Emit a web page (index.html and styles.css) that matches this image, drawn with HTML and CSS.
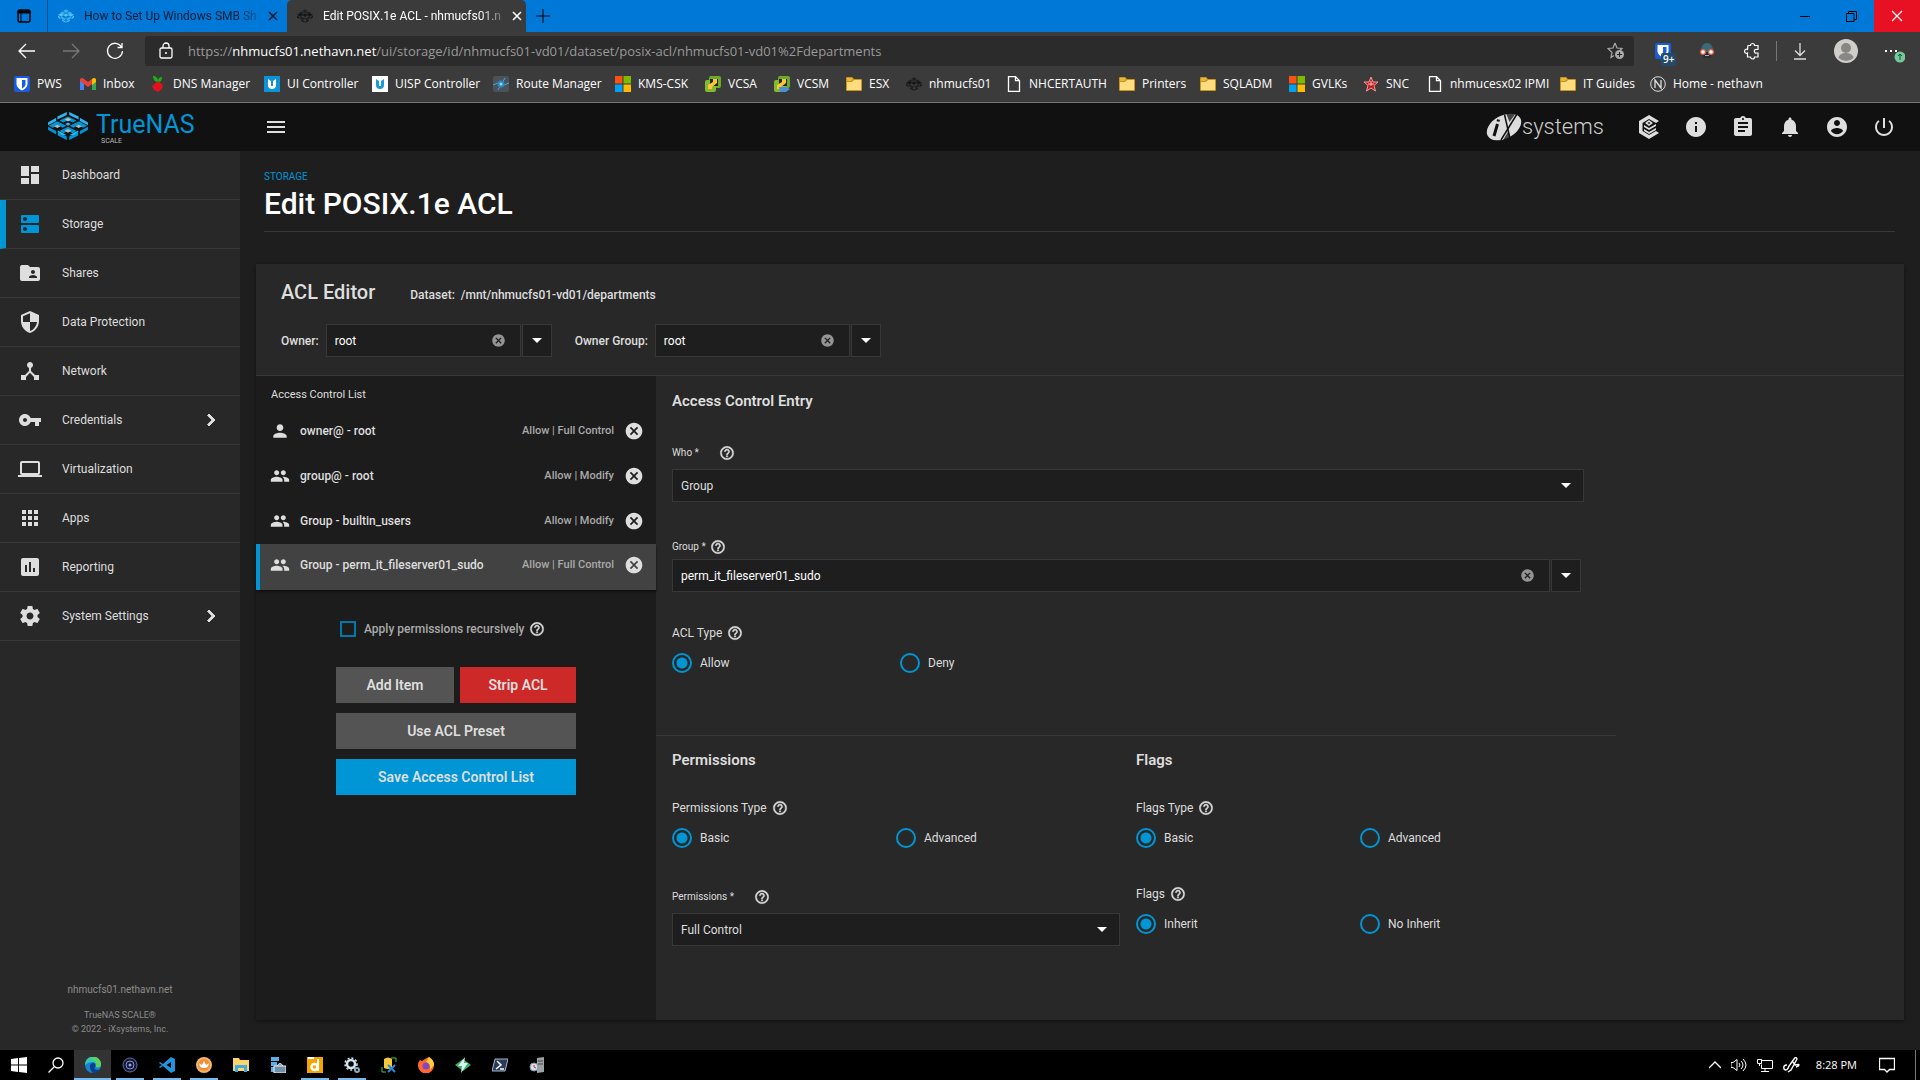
FILE: index.html
```html
<!DOCTYPE html>
<html lang="en">
<head>
<meta charset="utf-8">
<meta name="viewport" content="width=device-width, initial-scale=1">
<title>Edit POSIX.1e ACL - nhmucfs01.nethavn.net</title>
<link rel="stylesheet" href="styles.css">
</head>
<body>
<svg class="sprite" aria-hidden="true">
  <symbol id="close" viewBox="0 0 12 12"><path d="M2 2l8 8M10 2l-8 8" fill="none" stroke="currentColor" stroke-width="1.6"/></symbol>
  <symbol id="cancel" viewBox="0 0 24 24"><path d="M12 2C6.47 2 2 6.47 2 12s4.47 10 10 10 10-4.47 10-10S17.53 2 12 2zm5 13.59L15.59 17 12 13.41 8.41 17 7 15.59 10.59 12 7 8.41 8.41 7 12 10.59 15.59 7 17 8.41 13.41 12 17 15.59z"/></symbol>
  <symbol id="help" viewBox="0 0 24 24"><path d="M11 18h2v-2h-2v2zm1-16C6.48 2 2 6.48 2 12s4.48 10 10 10 10-4.48 10-10S17.52 2 12 2zm0 18c-4.41 0-8-3.59-8-8s3.59-8 8-8 8 3.59 8 8-3.59 8-8 8zm0-14c-2.21 0-4 1.79-4 4h2c0-1.1.9-2 2-2s2 .9 2 2c0 2-3 1.75-3 5h2c0-2.25 3-2.5 3-5 0-2.21-1.79-4-4-4z" stroke="currentColor" stroke-width=".6"/></symbol>
  <symbol id="person" viewBox="0 0 24 24"><path d="M12 12c2.21 0 4-1.79 4-4s-1.79-4-4-4-4 1.79-4 4 1.79 4 4 4zm0 2c-2.67 0-8 1.34-8 4v2h16v-2c0-2.66-5.33-4-8-4z"/></symbol>
  <symbol id="people" viewBox="0 0 24 24"><path d="M16 11c1.66 0 2.99-1.34 2.99-3S17.66 5 16 5c-1.66 0-3 1.34-3 3s1.34 3 3 3zm-8 0c1.66 0 2.99-1.34 2.99-3S9.66 5 8 5C6.34 5 5 6.34 5 8s1.34 3 3 3zm0 2c-2.33 0-7 1.17-7 3.5V19h14v-2.5c0-2.33-4.67-3.5-7-3.5zm8 0c-.29 0-.62.02-.97.05 1.16.84 1.97 1.97 1.97 3.45V19h6v-2.5c0-2.33-4.67-3.5-7-3.5z"/></symbol>
  <symbol id="chevron" viewBox="0 0 24 24"><path d="M10 6L8.59 7.41 13.17 12l-4.58 4.59L10 18l6-6z" stroke="currentColor"/></symbol>
  <symbol id="folder" viewBox="0 0 16 16"><path d="M0 2q0-1 1-1h5l2 2h7q1 0 1 1v10q0 1-1 1H1q-1 0-1-1z" fill="#c8951c"/><path d="M1 6h5l2-2h7v10H1z" fill="#ffdd7e"/><path d="M1 2h5l1 1-2 2H1z" fill="#e9b43a"/></symbol>
  <symbol id="windows4" viewBox="0 0 16 16"><path d="M0 0h7.500v7.500H0z" fill="#f65314"/><path d="M8.500 0H16v7.500H8.500z" fill="#7cbb00"/><path d="M0 8.500h7.500V16H0z" fill="#00a1f1"/><path d="M8.500 8.500H16V16H8.500z" fill="#ffbb00"/></symbol>
  <symbol id="page" viewBox="0 0 16 16"><path d="M2.500.700h7l4 4v10.600h-11zM9.500.700v4h4" fill="none" stroke="#fff" stroke-width="1.300"/></symbol>
  <symbol id="shield" viewBox="0 0 16 16"><rect width="16" height="16" rx="2" fill="#175ddc"/><path d="M2.500 2h11v6c0 3-3 5.500-5.500 6.500C5.500 13.500 2.500 11 2.500 8z" fill="#fff"/><path d="M8 4h3.500v4.500c0 1.500-2 3-3.500 4z" fill="#175ddc"/></symbol>
  <symbol id="nas" viewBox="0 0 40 34"><path class="nas-a" d="M20 0l7 4.500-7 4-7-4zM11.500 5.500l7 4-7 4-7-4zM28.500 5.500l7 4-7 4-7-4zM8 17l10 6v6L8 23zM32 17l-10 6v6l10-6z"/><path class="nas-b" d="M0 14l8-4 7 4-7 4zM40 14l-8-4-7 4 7 4zM20 11l7 4-7 4-7-4zM0 16l6 4v5l-6-5zM40 16l-6 4v5l6-5zM10 26l9 5v3l-9-5zM30 26l-9 5v3l9-5z"/><path class="nas-c" d="M20 6l4 2-4 3-4-3zM9 13l4 2-4 3-4-3zM31 13l4 2-4 3-4-3zM20 20l4 2-4 3-4-3z"/></symbol>
  <symbol id="putty" viewBox="0 0 16 16"><rect x="4" y="0" width="12" height="12" rx="2" fill="#68ad25"/><rect x="0" y="4" width="11" height="12" rx="2" fill="#81bb31"/><path d="M5 3h8v7h-8z" fill="#26251c"/><path d="M8 3h4v4L7 11v2H3V9l5-3z" fill="#ffc33d"/></symbol>
</svg>

<div class="window">
  <header class="browser">
    <div class="tabbar">
      <button class="tab-actions" aria-label="Tab actions"><svg width="14" height="14" viewBox="0 0 14 14"><rect x="1" y="1" width="12" height="12" rx="2" fill="none" stroke="#000" stroke-width="1.500"/><path d="M1 2h12v2H1zM4 4v9" stroke="#000" fill="#000"/></svg></button>
      <div class="tab">
        <svg class="nas-light" width="16" height="14"><use href="#nas"/></svg>
        <span class="tab-title">How to Set Up Windows SMB Sh</span>
        <button aria-label="Close tab"><svg width="12" height="12"><use href="#close"/></svg></button>
      </div>
      <div class="tab active">
        <svg class="nas-dark" width="16" height="14"><use href="#nas"/></svg>
        <span class="tab-title">Edit POSIX.1e ACL - nhmucfs01.n</span>
        <button aria-label="Close tab"><svg width="12" height="12"><use href="#close"/></svg></button>
      </div>
      <button class="new-tab" aria-label="New tab"><svg width="14" height="14" viewBox="0 0 14 14"><path d="M7 0v14M0 7h14" stroke="#000"/></svg></button>
      <div class="window-buttons">
        <button aria-label="Minimize"><svg width="10" height="10" viewBox="0 0 10 10"><path d="M0 5.500h10" stroke="#000"/></svg></button>
        <button aria-label="Restore"><svg width="11" height="11" viewBox="0 0 11 11"><path d="M.5 2.500h7.500v8H.5zM2.500 2V.500h8v8H8.500" fill="none" stroke="#000"/></svg></button>
        <button class="close-window" aria-label="Close"><svg width="14" height="14" viewBox="0 0 14 14"><path d="M2 2l10 10M12 2L2 12" stroke="#fff" stroke-width="1.200"/></svg></button>
      </div>
    </div>

    <div class="toolbar">
      <nav class="history">
        <button aria-label="Back"><svg width="18" height="16" viewBox="0 0 18 16"><path d="M17 8H1M8 1L1 8l7 7" fill="none" stroke="#fff" stroke-width="1.300"/></svg></button>
        <button aria-label="Forward"><svg width="18" height="16" viewBox="0 0 18 16"><path d="M1 8h16M10 1l7 7-7 7" fill="none" stroke="#777" stroke-width="1.300"/></svg></button>
        <button aria-label="Refresh"><svg width="18" height="18" viewBox="0 0 18 18"><path d="M15.500 5A7.500 7.500 0 1 0 16.500 9M16 1v4.500h-4.500" fill="none" stroke="#fff" stroke-width="1.300"/></svg></button>
      </nav>
      <div class="address">
        <svg width="14" height="18" viewBox="0 0 14 18"><rect x="1" y="6" width="12" height="10" rx="1.500" fill="none" stroke="#fff" stroke-width="1.300"/><path d="M4 6V4a3 3 0 0 1 6 0v2" fill="none" stroke="#fff" stroke-width="1.300"/><circle cx="7" cy="11" r="1" fill="#fff"/></svg>
        <span class="url">https://<b>nhmucfs01.nethavn.net</b>/ui/storage/id/nhmucfs01-vd01/dataset/posix-acl/nhmucfs01-vd01%2Fdepartments</span>
        <svg width="18" height="18" viewBox="0 0 18 18"><path d="M8 1l2 5 5 .5-3 3M8 1L6 6l-5 .5 4 4-1 5 3-2" fill="none" stroke="#aaa" stroke-width="1.200"/><circle cx="12.500" cy="12.500" r="4.500" fill="#aaa"/><path d="M12.500 10v5M10 12.500h5" stroke="#222"/></svg>
      </div>
      <div class="extensions">
        <button class="badged" aria-label="Password manager"><svg width="16" height="18"><use href="#shield"/></svg><span class="badge">9+</span></button>
        <button aria-label="Extension"><svg width="16" height="18" viewBox="0 0 16 18"><path d="M2 8a6 7 0 0 1 12 0v3H2z" fill="#386a7c"/><path d="M4 10h8v6H4z" fill="#263238"/><circle cx="4" cy="10" r="3" fill="#e9623e"/><circle cx="12" cy="10" r="3" fill="#e9623e"/><circle cx="4" cy="10" r="1.800" fill="#fff"/><circle cx="12" cy="10" r="1.800" fill="#fff"/><path d="M6 13h4v1H6z" fill="#aaa"/></svg></button>
        <button aria-label="Extensions"><svg width="16" height="18" viewBox="0 0 16 18"><path d="M4 3.500h2.500a2 2 0 1 1 4 0H14v4h-1.500a1.800 1.800 0 1 0 0 3.500H14v4h-3.500a2 2 0 0 1-4 0H3.500V11a2 2 0 1 1 0-3.500z" fill="none" stroke="#fff" stroke-width="1.200"/></svg></button>
        <span class="rule"></span>
        <button aria-label="Downloads"><svg width="14" height="17" viewBox="0 0 14 17"><path d="M7 0v12M2 7.500l5 5 5-5M1 16h12" fill="none" stroke="#ddd" stroke-width="1.300"/></svg></button>
        <button aria-label="Profile"><svg width="24" height="24" viewBox="0 0 24 24"><circle cx="12" cy="12" r="12" fill="#d0cec9"/><circle cx="12" cy="9" r="5" fill="#8a8683"/><path d="M4.500 19a7.500 5 0 0 1 15 0q-7.500 6-15 0z" fill="#8a8683"/></svg></button>
        <button aria-label="Settings and more"><svg width="24" height="24" viewBox="0 0 24 24"><path d="M4 11h2v2H4zM9 11h2v2H9zM14 11h2v2h-2z" fill="#fff"/><circle cx="19" cy="18" r="5.500" fill="#75c996"/><path d="M19 21v-6M17 17l2-2 2 2" fill="none" stroke="#154" /></svg></button>
      </div>
    </div>

    <nav class="bookmarks">
      <a href="#"><svg><use href="#shield"/></svg>PWS</a>
      <a href="#"><svg viewBox="0 0 16 16"><path d="M0 3h4v11H0z" fill="#4285f4"/><path d="M12 3h4v11h-4z" fill="#34a853"/><path d="M0 3q2-2 4 0l4 3 4-3v5l-4 3-4-3-4-3z" fill="#ea4335"/><path d="M12 3q2-2 4 0v3l-4 3z" fill="#fbbc04"/></svg>Inbox</a>
      <a href="#"><svg viewBox="0 0 16 16"><path d="M8 6C4 6 3 2 3 0c3 0 5 2 5 5 0-2 1-4 4-4 0 3-1 5-4 5z" fill="#16b316"/><path d="M8 5l5 4-1 4-4 3-4-2-2-4z" fill="#e0121c"/></svg>DNS Manager</a>
      <a href="#"><svg viewBox="0 0 16 16"><path d="M0 0h16v16H0z" fill="#0c93d8"/><path d="M4 3v6q0 4 4 4t4-4V3l-3 2v5H7V5z" fill="#fff"/></svg>UI Controller</a>
      <a href="#"><svg viewBox="0 0 16 16"><path d="M0 0h16v16H0z" fill="#fff"/><path d="M4 3v6q0 4 4 4t4-4V3l-3 2v5H7V5z" fill="#199cd8"/></svg>UISP Controller</a>
      <a href="#"><svg viewBox="0 0 16 16"><rect width="16" height="16" rx="2" fill="#4b5258"/><path d="M0 9l5-2 6 2 5-2M12 2L5 14" stroke="#3fa9e8" fill="none"/><circle cx="8" cy="8" r="3.500" fill="#2b87c5"/><circle cx="8" cy="8" r="1.500" fill="#acd"/></svg>Route Manager</a>
      <a href="#"><svg><use href="#windows4"/></svg>KMS-CSK</a>
      <a href="#"><svg><use href="#putty"/></svg>VCSA</a>
      <a href="#"><svg viewBox="0 0 16 16"><use href="#putty"/><path d="M5 11h7l4 2-4 3H6z" fill="#4b91d7"/></svg>VCSM</a>
      <a href="#"><svg><use href="#folder"/></svg>ESX</a>
      <a href="#"><svg class="nas-dark"><use href="#nas"/></svg>nhmucfs01</a>
      <a href="#"><svg><use href="#page"/></svg>NHCERTAUTH</a>
      <a href="#"><svg><use href="#folder"/></svg>Printers</a>
      <a href="#"><svg><use href="#folder"/></svg>SQLADM</a>
      <a href="#"><svg><use href="#windows4"/></svg>GVLKs</a>
      <a href="#"><svg viewBox="0 0 16 16"><path d="M8 1l2 5h5l-4 3.500 1.500 5.500L8 12l-4.500 3L5 9.500 1 6h5z" fill="#b71c1c" stroke="#f99"/><path d="M8 5v5M5 8h6" stroke="#fbb"/></svg>SNC</a>
      <a href="#"><svg><use href="#page"/></svg>nhmucesx02 IPMI</a>
      <a href="#"><svg><use href="#folder"/></svg>IT Guides</a>
      <a href="#"><svg viewBox="0 0 16 16"><circle cx="8" cy="8" r="7.300" fill="none" stroke="#ddd"/><path d="M5 12V4l6 8V4" fill="none" stroke="#ddd" stroke-width="1.300"/></svg>Home - nethavn</a>
    </nav>
  </header>

  <header class="app-header">
    <a class="brand" href="#" aria-label="TrueNAS SCALE">
      <svg width="40" height="28" viewBox="0 0 98 82" preserveAspectRatio="none">
        <path d="M46 0L23 13v9l23-13zM52 0l23 13v9L52 9zM20 17L0 31v8l20-13zM78 17l20 14v8L78 26z" fill="#34b4ee"/>
        <path d="M49 13L28 25l10 6 11-7 11 7 10-6zM22 27L2 40l10 6 12-8 12 8 9-6zM76 27L53 40l9 6 12-8 12 8 10-6zM49 43L28 56l10 6 11-7 11 7 10-6z" fill="#0095d5"/>
        <path d="M49 17l8 5-8 6-8-6zM23 37l8 5-8 5-8-5zM75 37l8 5-8 5-8-5zM49 50l8 5-8 6-8-6z" fill="#bbb"/>
        <path d="M0 43l20 13v10L0 52zM98 43L78 56v10l20-14zM24 58l22 14v10L24 69zM74 58L52 72v10l22-13z" fill="#0095d5"/>
        <path d="M24 54l10 6 12 8-12-1-10-9zM74 54l-10 6-12 8 12-1 10-9zM42 35l7 5 7-5-7-4z" fill="#34b4ee"/>
      </svg>
      <span class="brand-text"><span class="brand-name">TrueNAS</span><span class="brand-edition">SCALE</span></span>
    </a>
    <button class="menu-button" aria-label="Toggle menu"><svg width="26" height="24" viewBox="0 0 24 24"><path d="M3 18h18v-2H3v2zm0-5h18v-2H3v2zm0-7v2h18V6H3z"/></svg></button>
    <div class="app-actions">
      <a class="ix" href="#" aria-label="iXsystems"><svg width="36" height="28" viewBox="0 0 36 28"><ellipse cx="18" cy="14" rx="18.500" ry="11.500" transform="rotate(-28 18 14)" fill="#ddd"/><path d="M11.500 11L8 23M12.500 6.500l-.5 2" stroke="#111" stroke-width="3" fill="none"/><path d="M18.500 1.500l5.500 24" stroke="#111" stroke-width="1.500"/><path d="M31 1L15 27" stroke="#111" stroke-width="1.500"/><path d="M20 0h10l-6.500 9zM22.500 18l-6 10h9z" fill="#111" opacity=".75"/></svg><span>systems</span></a>
      <button aria-label="TrueCommand"><svg viewBox="0 0 24 24"><path d="M12 0l10 6-3 2-7-4-6.500 4v8l6.500 4 7-4 3 2-10 6-10-6V6z"/><path d="M12 5l4 3-4 3-4-3zM7 10l5 3v2l-5-3zM7 14l5 3v2l-5-3zM12 13l7-4v2l-7 4zM12 17l7-4v2l-7 4z"/><path d="M12 7l1.500 1L12 9l-1.500-1z" fill="#111"/></svg></button>
      <button aria-label="Status"><svg viewBox="0 0 24 24"><path d="M12 2C6.480 2 2 6.480 2 12s4.480 10 10 10 10-4.480 10-10S17.520 2 12 2zm1 15h-2v-6h2v6zm0-8h-2V7h2v2z"/></svg></button>
      <button aria-label="Tasks"><svg viewBox="0 0 24 24"><path d="M19 3h-4.180C14.400 1.840 13.300 1 12 1c-1.300 0-2.400.840-2.820 2H5c-1.100 0-2 .9-2 2v14c0 1.100.9 2 2 2h14c1.100 0 2-.9 2-2V5c0-1.100-.9-2-2-2zm-7 0c.550 0 1 .450 1 1s-.450 1-1 1-1-.450-1-1 .450-1 1-1zm2 14H7v-2h7v2zm3-4H7v-2h10v2zm0-4H7V7h10v2z"/></svg></button>
      <button aria-label="Alerts"><svg viewBox="0 0 24 24"><path d="M12 22c1.100 0 2-.9 2-2h-4c0 1.100.89 2 2 2zm6-6v-5c0-3.070-1.640-5.640-4.500-6.320V4c0-.83-.67-1.500-1.500-1.500s-1.500.67-1.500 1.500v.68C7.630 5.360 6 7.920 6 11v5l-2 2v1h16v-1l-2-2z"/></svg></button>
      <button aria-label="Account"><svg viewBox="0 0 24 24"><path d="M12 2C6.480 2 2 6.480 2 12s4.480 10 10 10 10-4.480 10-10S17.520 2 12 2zm0 3c1.660 0 3 1.340 3 3s-1.340 3-3 3-3-1.340-3-3 1.340-3 3-3zm0 14.200c-2.500 0-4.710-1.280-6-3.220.030-1.990 4-3.080 6-3.080 1.990 0 5.970 1.090 6 3.080-1.290 1.940-3.500 3.220-6 3.220z"/></svg></button>
      <button aria-label="Power"><svg viewBox="0 0 24 24"><path d="M13 3h-2v10h2V3zm4.830 2.170l-1.420 1.420C17.990 7.860 19 9.810 19 12c0 3.870-3.130 7-7 7s-7-3.130-7-7c0-2.190 1.010-4.140 2.580-5.420L6.170 5.170C4.230 6.820 3 9.260 3 12c0 4.970 4.030 9 9 9s9-4.030 9-9c0-2.740-1.230-5.180-3.170-6.830z"/></svg></button>
    </div>
  </header>

  <div class="app-body">
    <aside class="sidebar">
      <nav class="menu">
        <a href="#"><svg viewBox="0 0 24 24"><path d="M3 13h8V3H3v10zm0 8h8v-6H3v6zm10 0h8V11h-8v10zm0-18v6h8V3h-8z"/></svg><span>Dashboard</span></a>
        <a href="#" class="current"><svg viewBox="0 0 24 24"><path d="M20 13H4c-.55 0-1 .45-1 1v6c0 .55.45 1 1 1h16c.55 0 1-.45 1-1v-6c0-.55-.45-1-1-1zM7 19c-1.100 0-2-.9-2-2s.9-2 2-2 2 .9 2 2-.9 2-2 2zM20 3H4c-.55 0-1 .45-1 1v6c0 .55.45 1 1 1h16c.55 0 1-.45 1-1V4c0-.55-.45-1-1-1zM7 9c-1.100 0-2-.9-2-2s.9-2 2-2 2 .9 2 2-.9 2-2 2z"/></svg><span>Storage</span></a>
        <a href="#"><svg viewBox="0 0 24 24"><path d="M20 6h-8l-2-2H4c-1.100 0-1.990.9-1.990 2L2 18c0 1.100.9 2 2 2h16c1.100 0 2-.9 2-2V8c0-1.100-.9-2-2-2zm-5 3c1.100 0 2 .9 2 2s-.9 2-2 2-2-.9-2-2 .9-2 2-2zm4 8h-8v-1c0-1.330 2.670-2 4-2s4 .67 4 2v1z"/></svg><span>Shares</span></a>
        <a href="#"><svg viewBox="0 0 24 24"><path d="M12 1L3 5v6c0 5.550 3.840 10.740 9 12 5.160-1.260 9-6.450 9-12V5l-9-4zm0 10.990h7c-.53 4.120-3.280 7.790-7 8.940V12H5V6.300l7-3.110v8.800z"/></svg><span>Data Protection</span></a>
        <a href="#"><svg viewBox="0 0 24 24"><path d="M17 16l-4-4V8.820C14.160 8.400 15 7.300 15 6c0-1.660-1.340-3-3-3S9 4.340 9 6c0 1.300.84 2.400 2 2.820V12l-4 4H3v5h5v-3.050l4-4.200 4 4.200V21h5v-5h-4z"/></svg><span>Network</span></a>
        <a href="#"><svg viewBox="0 0 24 24"><path d="M12.650 10C11.830 7.670 9.610 6 7 6c-3.310 0-6 2.690-6 6s2.690 6 6 6c2.610 0 4.830-1.670 5.650-4H17v4h4v-4h2v-4H12.650zM7 14c-1.100 0-2-.9-2-2s.9-2 2-2 2 .9 2 2-.9 2-2 2z"/></svg><span>Credentials</span><svg><use href="#chevron"/></svg></a>
        <a href="#"><svg viewBox="0 0 24 24"><path d="M20 18c1.100 0 1.990-.9 1.990-2L22 6c0-1.100-.9-2-2-2H4c-1.100 0-2 .9-2 2v10c0 1.100.9 2 2 2H0v2h24v-2h-4zM4 6h16v10H4V6z"/></svg><span>Virtualization</span></a>
        <a href="#"><svg viewBox="0 0 24 24"><path d="M4 8h4V4H4v4zm6 12h4v-4h-4v4zm-6 0h4v-4H4v4zm0-6h4v-4H4v4zm6 0h4v-4h-4v4zm6-10v4h4V4h-4zm-6 4h4V4h-4v4zm6 6h4v-4h-4v4zm0 6h4v-4h-4v4z"/></svg><span>Apps</span></a>
        <a href="#"><svg viewBox="0 0 24 24"><path d="M19 3H5c-1.100 0-2 .9-2 2v14c0 1.100.9 2 2 2h14c1.100 0 2-.9 2-2V5c0-1.100-.9-2-2-2zM9 17H7v-7h2v7zm4 0h-2V7h2v10zm4 0h-2v-4h2v4z"/></svg><span>Reporting</span></a>
        <a href="#"><svg viewBox="0 0 24 24"><path d="M19.430 12.980c.04-.32.07-.64.07-.98s-.03-.66-.07-.98l2.110-1.650c.19-.15.24-.42.12-.64l-2-3.460c-.12-.22-.39-.3-.61-.22l-2.490 1c-.52-.4-1.080-.73-1.690-.98l-.38-2.650C14.460 2.180 14.250 2 14 2h-4c-.25 0-.46.18-.49.42l-.38 2.650c-.61.25-1.170.59-1.690.98l-2.490-1c-.23-.09-.49 0-.61.22l-2 3.460c-.13.22-.07.49.12.64l2.110 1.650c-.04.32-.07.65-.07.98s.03.66.07.98l-2.110 1.650c-.19.15-.24.42-.12.64l2 3.460c.12.22.39.3.61.22l2.490-1c.52.4 1.080.73 1.690.98l.38 2.650c.03.24.24.42.49.42h4c.25 0 .46-.18.49-.42l.38-2.650c.61-.25 1.170-.59 1.690-.98l2.490 1c.23.09.49 0 .61-.22l2-3.460c.12-.22.07-.49-.12-.64l-2.110-1.650zM12 15.500c-1.930 0-3.500-1.570-3.500-3.500s1.570-3.500 3.500-3.500 3.500 1.570 3.500 3.500-1.570 3.500-3.500 3.500z"/></svg><span>System Settings</span><svg><use href="#chevron"/></svg></a>
      </nav>
      <footer class="sidebar-footer">
        <p class="host">nhmucfs01.nethavn.net</p>
        <p>TrueNAS SCALE®</p>
        <p>© 2022 - iXsystems, Inc.</p>
      </footer>
    </aside>

    <main class="content">
      <div class="page-title">
        <a href="#">STORAGE</a>
        <h1>Edit POSIX.1e ACL</h1>
      </div>

      <section class="card">
        <header class="card-header">
          <div class="card-title"><h2>ACL Editor</h2><span>Dataset:&nbsp; /mnt/nhmucfs01-vd01/departments</span></div>
          <div class="owners">
            <label for="owner">Owner:</label>
            <div class="combo">
              <div class="combo-box"><input id="owner" type="text" value="root"><button aria-label="Clear owner"><svg><use href="#cancel"/></svg></button></div>
              <button class="drop" aria-label="Show owners"></button>
            </div>
            <label for="owner-group">Owner Group:</label>
            <div class="combo">
              <div class="combo-box"><input id="owner-group" type="text" value="root"><button aria-label="Clear owner group"><svg><use href="#cancel"/></svg></button></div>
              <button class="drop" aria-label="Show owner groups"></button>
            </div>
          </div>
        </header>

        <div class="card-body">
          <section class="acl">
            <h3>Access Control List</h3>
            <ul>
              <li><svg><use href="#person"/></svg><span class="who">owner@ - root</span><span class="perm">Allow | Full Control</span><button aria-label="Remove"><svg><use href="#cancel"/></svg></button></li>
              <li><svg><use href="#people"/></svg><span class="who">group@ - root</span><span class="perm">Allow | Modify</span><button aria-label="Remove"><svg><use href="#cancel"/></svg></button></li>
              <li><svg><use href="#people"/></svg><span class="who">Group - builtin_users</span><span class="perm">Allow | Modify</span><button aria-label="Remove"><svg><use href="#cancel"/></svg></button></li>
              <li class="selected"><svg><use href="#people"/></svg><span class="who">Group - perm_it_fileserver01_sudo</span><span class="perm">Allow | Full Control</span><button aria-label="Remove"><svg><use href="#cancel"/></svg></button></li>
            </ul>
            <div class="acl-actions">
              <div class="recursive"><input id="recursive" type="checkbox"><label for="recursive">Apply permissions recursively</label><svg class="help"><use href="#help"/></svg></div>
              <button class="btn">Add Item</button><button class="btn danger">Strip ACL</button>
              <button class="btn wide">Use ACL Preset</button>
              <button class="btn wide primary">Save Access Control List</button>
            </div>
          </section>

          <form class="entry">
            <section class="entry-top">
              <h3>Access Control Entry</h3>
              <div class="field">
                <div class="caption"><label for="who">Who *</label><svg class="help"><use href="#help"/></svg></div>
                <div class="select"><select id="who"><option>Group</option></select></div>
              </div>
              <div class="field group-field">
                <div class="caption tight"><label for="group">Group *</label><svg class="help"><use href="#help"/></svg></div>
                <div class="combo stretch">
                  <div class="combo-box"><input id="group" type="text" value="perm_it_fileserver01_sudo"><button type="button" aria-label="Clear group"><svg><use href="#cancel"/></svg></button></div>
                  <button type="button" class="drop" aria-label="Show groups"></button>
                </div>
              </div>
              <fieldset class="acl-type">
                <legend>ACL Type <svg class="help"><use href="#help"/></svg></legend>
                <div class="radios"><label><input type="radio" name="type" checked>Allow</label><label><input type="radio" name="type">Deny</label></div>
              </fieldset>
            </section>
            <div class="entry-bottom">
              <section>
                <h3>Permissions</h3>
                <fieldset>
                  <legend>Permissions Type <svg class="help"><use href="#help"/></svg></legend>
                  <div class="radios"><label><input type="radio" name="ptype" checked>Basic</label><label><input type="radio" name="ptype">Advanced</label></div>
                </fieldset>
                <div class="field perm-field">
                  <div class="caption"><label for="perms">Permissions *</label><svg class="help"><use href="#help"/></svg></div>
                  <div class="select"><select id="perms"><option>Full Control</option></select></div>
                </div>
              </section>
              <section>
                <h3>Flags</h3>
                <fieldset>
                  <legend>Flags Type <svg class="help"><use href="#help"/></svg></legend>
                  <div class="radios"><label><input type="radio" name="ftype" checked>Basic</label><label><input type="radio" name="ftype">Advanced</label></div>
                </fieldset>
                <fieldset class="flags">
                  <legend>Flags <svg class="help"><use href="#help"/></svg></legend>
                  <div class="radios"><label><input type="radio" name="flags" checked>Inherit</label><label><input type="radio" name="flags">No Inherit</label></div>
                </fieldset>
              </section>
            </div>
          </form>
        </div>
      </section>
    </main>
  </div>

  <footer class="taskbar">
    <div class="apps">
      <button aria-label="Start"><svg viewBox="0 0 16 16"><path d="M0 2l7-1v6.500H0zM8 1l8-1v7.500H8zM0 8.500h7V15l-7-1zM8 8.500h8V16l-8-1z" fill="#fff"/></svg></button>
      <button aria-label="Search"><svg viewBox="0 0 16 16"><circle cx="10" cy="6" r="5" fill="none" stroke="#fff" stroke-width="1.300"/><path d="M6.500 9.500L.5 15.500" stroke="#fff" stroke-width="1.300"/></svg></button>
      <button class="focused" aria-label="Edge"><svg viewBox="0 0 16 16"><circle cx="8" cy="8" r="8" fill="#1582d2"/><path d="M0 8a8 8 0 0 1 16-1c.5 3-2 4-5 3q1-4-3-5-5 0-8 3z" fill="#38c8b0"/><path d="M10 0q6 2 6 7-1 4-5 3Q13 4 6 1z" fill="#62d35a"/><path d="M5 9q0-3 4-3 2 1 1 4-2 2 2 3 2 0 3-1-3 5-7 4-3-2-3-7z" fill="#0b3f8c"/></svg></button>
      <button class="open" aria-label="Settings app"><svg viewBox="0 0 16 16"><circle cx="8" cy="8" r="7" fill="#10163c" stroke="#65709c"/><circle cx="8" cy="8" r="4" fill="none" stroke="#8d96ba"/><circle cx="8" cy="8" r="1.500" fill="#9ba7d6"/></svg></button>
      <button class="open" aria-label="Code"><svg viewBox="0 0 16 16"><path d="M12 0l4 2v12l-4 2-8-7-3 2-1-1 3-2-3-2 1-1 3 2zM12 5L7.500 8l4.500 3z" fill="#2196e0"/></svg></button>
      <button class="open" aria-label="Mail"><svg viewBox="0 0 16 16"><circle cx="8" cy="8" r="8" fill="#f8b46a"/><circle cx="8" cy="8" r="6" fill="#ee8f37"/><path d="M3 6l3 2 2-4 2 4 3-2q0 5-5 5T3 6z" fill="#fff"/></svg></button>
      <button aria-label="Files"><svg viewBox="0 0 16 16"><path d="M0 1h6l1 2h9v11H0z" fill="#fbd569"/><path d="M2 8h12v7h-3v-4H5v4H2z" fill="#3fa9e2"/></svg></button>
      <button aria-label="Server manager"><svg viewBox="0 0 16 16"><path d="M1 0h8v4H1zM1 5h6v4H1zM1 10h4v5H1z" fill="#59b0e8"/><path d="M4 9h12v7H4zM7 9q3-5 6 0" fill="#7090a8" stroke="#eee"/></svg></button>
      <button class="open" aria-label="Downloads"><svg viewBox="0 0 16 16"><path d="M0 0h16v16H0z" fill="#f7a400"/><circle cx="7.500" cy="10" r="3" fill="none" stroke="#fff" stroke-width="2.500"/><path d="M11 2v12M1 1h6" stroke="#fff" stroke-width="2"/></svg></button>
      <button class="open" aria-label="Services"><svg viewBox="0 0 16 16"><circle cx="7" cy="7" r="4" fill="none" stroke="#cfe6f4" stroke-width="2.500"/><circle cx="7" cy="7" r="6" fill="none" stroke="#cfe6f4" stroke-width="1.500" stroke-dasharray="2 2"/><circle cx="13" cy="13" r="2" fill="none" stroke="#8aaabc" stroke-width="2"/></svg></button>
      <button aria-label="Database"><svg viewBox="0 0 16 16"><path d="M3 2q4-3 8 0v9q-4 2-8 0z" fill="#f6c63c"/><path d="M10 1h5v4M1 10v5h4" stroke="#4c3" fill="none"/><path d="M7 8l7 7M14 8l-7 7" stroke="#2788d8" stroke-width="2"/></svg></button>
      <button aria-label="Firefox"><svg viewBox="0 0 16 16"><path d="M2 3l2 1 3-2 4-2q5 3 5 8a8 8 0 0 1-16 1q0-4 2-6z" fill="#ff6a2b"/><path d="M11 0q5 3 5 8l-4 5q1-6-4-8z" fill="#ffcf35"/><circle cx="8" cy="9" r="3.500" fill="#8545c9"/></svg></button>
      <button aria-label="Flash"><svg viewBox="0 0 16 16"><path d="M8 2l8 6-8 6-8-6z" fill="#3eae67"/><path d="M10 0L3 9h4l-1 7 7-10H9z" fill="#d7f5ee"/></svg></button>
      <button aria-label="PowerShell"><svg viewBox="0 0 16 16"><path d="M3 2h13l-3 12H0z" fill="#293b5b" stroke="#a8b8cc"/><path d="M5 4l4 4-5 4M8 12h4" fill="none" stroke="#fff" stroke-width="1.500"/></svg></button>
      <button aria-label="System monitor"><svg viewBox="0 0 16 16"><path d="M8 1l7-1v15l-7 1z" fill="#9ba3a6"/><path d="M9 4h5M9 7h5" stroke="#444"/><circle cx="5" cy="10" r="4" fill="#ddd" stroke="#6c9cc2"/><path d="M5 8v2l2 1" stroke="#c33" fill="none"/></svg></button>
    </div>
    <div class="tray">
      <svg width="12" height="16" viewBox="0 0 12 16"><path d="M0 11l6-6 6 6" fill="none" stroke="#fff" stroke-width="1.300"/></svg>
      <svg width="16" height="16" viewBox="0 0 16 16"><path d="M0 5.500h2l4-3v11l-4-3H0zM8 6q2 2 0 4M10 4q4 4 0 8M12 2q6 6 0 12" fill="none" stroke="#fff"/></svg>
      <svg width="16" height="16" viewBox="0 0 16 16"><path d="M4 3.500h11.500v8h-11v-4M8 11v4M4 14.500h8M.5 2.500h4v4h-4zM2.500 6v3" fill="none" stroke="#fff"/></svg>
      <svg width="17" height="16" viewBox="0 0 17 16"><path d="M4 8Q0 8 1 12q3 3 5-3l5-7q2-3 3 0L8 13l-3 2M10 5l2 3q4-1 4 0t-3 2" fill="none" stroke="#fff" stroke-width="1.400"/></svg>
      <time>8:28 PM</time>
      <svg width="16" height="16" viewBox="0 0 16 16"><path d="M.5 1.500h15v11h-5l-2.500 2.500-2.500-2.500h-5z" fill="none" stroke="#fff" stroke-width="1.300"/></svg>
      <span class="show-desktop"></span>
    </div>
  </footer>
</div>
</body>
</html>
```
FILE: styles.css
```css
* { box-sizing: border-box; }

body {
  margin: 0;
  background: #1e1e1e;
  color: #dedede;
  font: 12px/16px Roboto, sans-serif;
}

button {
  margin: 0;
  padding: 0;
  border: 0;
  background: none;
  color: inherit;
  font: inherit;
  display: flex;
  align-items: center;
  justify-content: center;
}

a { color: inherit; text-decoration: none; }
svg { fill: currentColor; display: block; flex: none; }
h1, h2, h3, p, ul, fieldset { margin: 0; padding: 0; border: 0; }
fieldset { min-width: 0; }
legend { padding: 0; }

.sprite { position: absolute; width: 0; height: 0; }

.window {
  min-height: 100vh;
  display: grid;
  grid-template-rows: auto auto 1fr auto;
}

/* Browser chrome */
.browser {
  background: #3b3b3b;
  border-bottom: 1px solid #767676;
  color: #fff;
  font: 12px/16px "Open Sans", sans-serif;
}

.tabbar { display: flex; height: 32px; background: #0078d7; }
.tab-actions { width: 48px; border-right: 1px solid #004e8c; }
.tab {
  display: flex;
  align-items: center;
  gap: 10px;
  width: 239px;
  padding: 0 10px;
  color: #001b33;
}
.tab.active { background: #3b3b3b; color: #fff; border-radius: 5px 5px 0 0; }
.tab-title {
  flex: 1;
  font-family: Roboto, sans-serif;
  white-space: nowrap;
  mask-image: linear-gradient(to right, #000 88%, rgba(0, 0, 0, .3));
}
.new-tab { width: 34px; color: #000; }
.window-buttons { display: flex; margin-left: auto; }
.window-buttons button { width: 46px; }
.window-buttons .close-window { background: #e81123; }

.nas-light, .nas-dark { fill: currentColor; }
.nas-light { color: #55c3f5; }
.nas-dark { color: #161616; }
.nas-a { opacity: .7; }
.nas-c { opacity: .4; }

.toolbar { display: flex; align-items: center; gap: 12px; height: 38px; padding: 0 8px 0 18px; }
.history { display: flex; gap: 26px; width: 115px; }
.address {
  flex: 1;
  display: flex;
  align-items: center;
  gap: 15px;
  height: 30px;
  padding: 0 9px 0 14px;
  border-radius: 3px;
  background: #2b2b2b;
}
.url { flex: 1; color: #9a9a9a; font-size: 13px; }
.url b { color: #fff; font-weight: 400; }
.extensions {
  display: grid;
  grid-template-columns: 34px 54px 36px 12px 36px 56px 38px;
  align-items: center;
  justify-items: center;
}
.rule { width: 1px; height: 20px; background: #777; }
.badged { position: relative; }
.badge {
  position: absolute;
  left: 6px;
  top: 11px;
  padding: 0 2px;
  border-radius: 2px;
  background: #24496b;
  font-size: 10px;
  font-weight: 600;
  line-height: 13px;
}

.bookmarks {
  display: grid;
  grid-template-columns: 66px 70px 114px 108px 121px 122px 90px 69px 72px 60px 100px 113px 81px 89px 74px 64px 133px 90px 1fr;
  height: 32px;
  padding: 0 14px 4px;
  align-items: center;
}
.bookmarks a { display: flex; align-items: center; gap: 7px; white-space: nowrap; }
.bookmarks svg { width: 16px; height: 16px; }

/* Application header */
.app-header { display: flex; align-items: center; height: 48px; background: #111; }
.brand { display: flex; gap: 8px; width: 240px; padding: 2px 0 0 48px; }
.brand-text { display: flex; flex-direction: column; color: #0095d5; }
.brand-name { font-size: 25px; line-height: 26px; }
.brand-edition { padding-left: 5px; color: #bbb; font-size: 7px; line-height: 7px; }
.menu-button { margin-left: 23px; }
.app-actions { display: flex; align-items: center; margin-left: auto; padding-right: 13px; }
.app-actions button { width: 47px; }
.app-actions button svg { width: 24px; height: 24px; }
.ix { display: flex; align-items: center; width: 139px; color: #ccc; font-size: 22px; font-weight: 300; line-height: 24px; }

.app-body { display: flex; }

/* Sidebar */
.sidebar {
  flex: none;
  display: flex;
  flex-direction: column;
  width: 240px;
  background: #282828;
}
.menu a {
  display: flex;
  align-items: center;
  gap: 20px;
  height: 49px;
  padding: 0 17px 0 18px;
  border-bottom: 1px solid #383838;
}
.menu a.current { padding-left: 12px; border-left: 6px solid #0095d5; }
.menu a.current svg { color: #0095d5; }
.menu svg { width: 24px; height: 24px; }
.menu span { flex: 1; }
.sidebar-footer { margin-top: auto; padding-bottom: 14px; color: #8c8c8c; font-size: 9px; line-height: 14px; text-align: center; }
.sidebar-footer .host { margin-bottom: 11px; font-size: 10px; }

/* Content */
.content { flex: 1; min-width: 0; padding: 18px 16px 30px; }
.page-title { margin: 0 9px 32px 8px; border-bottom: 1px solid #383838; }
.page-title a { color: #0095d5; font-size: 10px; line-height: 16px; display: block; }
.page-title h1 { padding-bottom: 8px; color: #fff; font-size: 30px; line-height: 38px; font-weight: 500; }

.card { background: #282828; box-shadow: 0 1px 3px #111; }
.card-header { height: 112px; padding: 16px 25px; border-bottom: 1px solid #383838; }
.card-title { display: flex; gap: 35px; align-items: center; height: 24px; margin-bottom: 20px; }
.card-title h2 { font-size: 20px; line-height: 24px; font-weight: 500; }
.card-title span { padding-top: 6px; font-weight: 500; }
.owners { display: flex; align-items: center; }
.owners label { font-weight: 500; margin-right: 7px; }
.owners .combo { width: 226px; margin-right: 23px; }

.combo { display: flex; gap: 1px; }
.combo-box {
  flex: 1;
  display: flex;
  align-items: center;
  min-width: 0;
  height: 33px;
  padding: 0 14px 0 8px;
  border: 1px solid #383838;
  background: #1e1e1e;
}
.combo-box input {
  flex: 1;
  min-width: 0;
  padding: 0;
  border: 0;
  background: none;
  color: #fff;
  font: inherit;
}
.combo-box svg { width: 15px; height: 15px; color: #949494; }
.drop { width: 30px; border: 1px solid #383838; background: #1e1e1e; }
.drop::after, .select::after {
  content: "";
  border: 5px solid transparent;
  border-top-color: #fff;
  border-bottom: 0;
}

.card-body { display: flex; min-height: 644px; }

/* Access control list */
.acl { flex: none; width: 400px; background: #1c1c1c; }
.acl h3 { padding: 11px 15px 6px; font-size: 11px; font-weight: 400; line-height: 16px; }
.acl ul { list-style: none; }
.acl li { display: flex; align-items: center; height: 45px; padding: 0 12px 2px 14px; }
.acl li > svg { width: 20px; height: 20px; margin-right: 10px; }
.acl li.selected { height: 46px; padding: 0 12px 4px 10px; border-left: 4px solid #0095d5; background: #424242; box-shadow: 0 2px 2px #111; }
.acl .who { flex: 1; font-weight: 500; }
.acl .perm { margin-right: 10px; color: #aaa; font-size: 11px; font-weight: 500; }
.acl li button svg { width: 20px; height: 20px; }

.acl-actions { display: grid; grid-template-columns: 118px 116px; gap: 10px 6px; padding: 29px 80px 0; }
.recursive { grid-column: 1 / -1; display: flex; align-items: center; height: 20px; margin: 0 0 18px 4px; gap: 8px; color: #aaa; font-weight: 500; }
.recursive input { appearance: none; width: 16px; height: 16px; margin: 0; border: 2px solid #0078ab; }
.recursive .help { margin-left: -3px; }
.help { width: 16px; height: 16px; color: #dedede; }
.btn { height: 36px; background: #545454; font-size: 14px; font-weight: 600; }
.wide { grid-column: 1 / -1; }
.danger { background: #ce2929; }
.primary { background: #0095d5; }

/* Access control entry */
.entry { flex: 1; min-width: 0; }
.entry h3 { font-size: 15px; line-height: 20px; font-weight: 600; }
.entry-top { max-width: 960px; height: 360px; padding: 15px 32px 0 16px; border-bottom: 1px solid #383838; }
.entry-top > .field { margin-top: 34px; }
.entry-top > .group-field { margin-top: 37px; }
.caption { display: flex; align-items: center; gap: 20px; height: 16px; margin-bottom: 8px; font-size: 10px; }
.caption.tight { gap: 4px; margin-bottom: 4px; }
.select { position: relative; height: 33px; }
.select select {
  appearance: none;
  width: 100%;
  height: 100%;
  padding: 0 8px;
  border: 1px solid #383838;
  border-radius: 0;
  background: #1e1e1e;
  color: #dedede;
  font: inherit;
}
.select::after { position: absolute; right: 13px; top: 14px; }
.stretch { margin-right: 3px; }
legend { display: flex; align-items: center; gap: 5px; height: 18px; }
.acl-type { margin-top: 32px; }
.radios { display: grid; grid-template-columns: 228px 1fr; padding-top: 11px; }
.radios label { display: flex; align-items: center; gap: 8px; height: 20px; }
.radios input {
  appearance: none;
  width: 20px;
  height: 20px;
  margin: 0;
  border: 2px solid #0095d5;
  border-radius: 50%;
}
.radios input:checked { background: radial-gradient(circle, #0095d5 5px, transparent 6px); }
.entry-bottom { display: grid; grid-template-columns: 448px 448px; gap: 16px; padding: 14px 16px; }
.entry-bottom .radios { grid-template-columns: 224px 1fr; }
.entry-bottom fieldset { margin-top: 29px; }
.perm-field { margin-top: 41px; }
.entry-bottom .flags { margin-top: 37px; }

/* Taskbar */
.taskbar { display: flex; height: 30px; background: #000; color: #fff; font: 12px/16px "Open Sans", sans-serif; }
.apps { display: flex; }
.apps button { width: 37px; border: solid transparent; border-width: 2px 0; }
.apps button svg { width: 16px; height: 16px; }
.apps .focused { background: #333; border-bottom-color: #76b9ed; }
.apps .open { background: linear-gradient(#76b9ed, #76b9ed) center bottom / 28px 2px no-repeat border-box; }
.tray { display: flex; align-items: center; margin-left: auto; gap: 10px; }
.tray time { margin: 0 12px 0 6px; font-size: 11px; }
.show-desktop { width: 5px; height: 30px; margin-left: 10px; border-left: 1px solid #777; }
```
